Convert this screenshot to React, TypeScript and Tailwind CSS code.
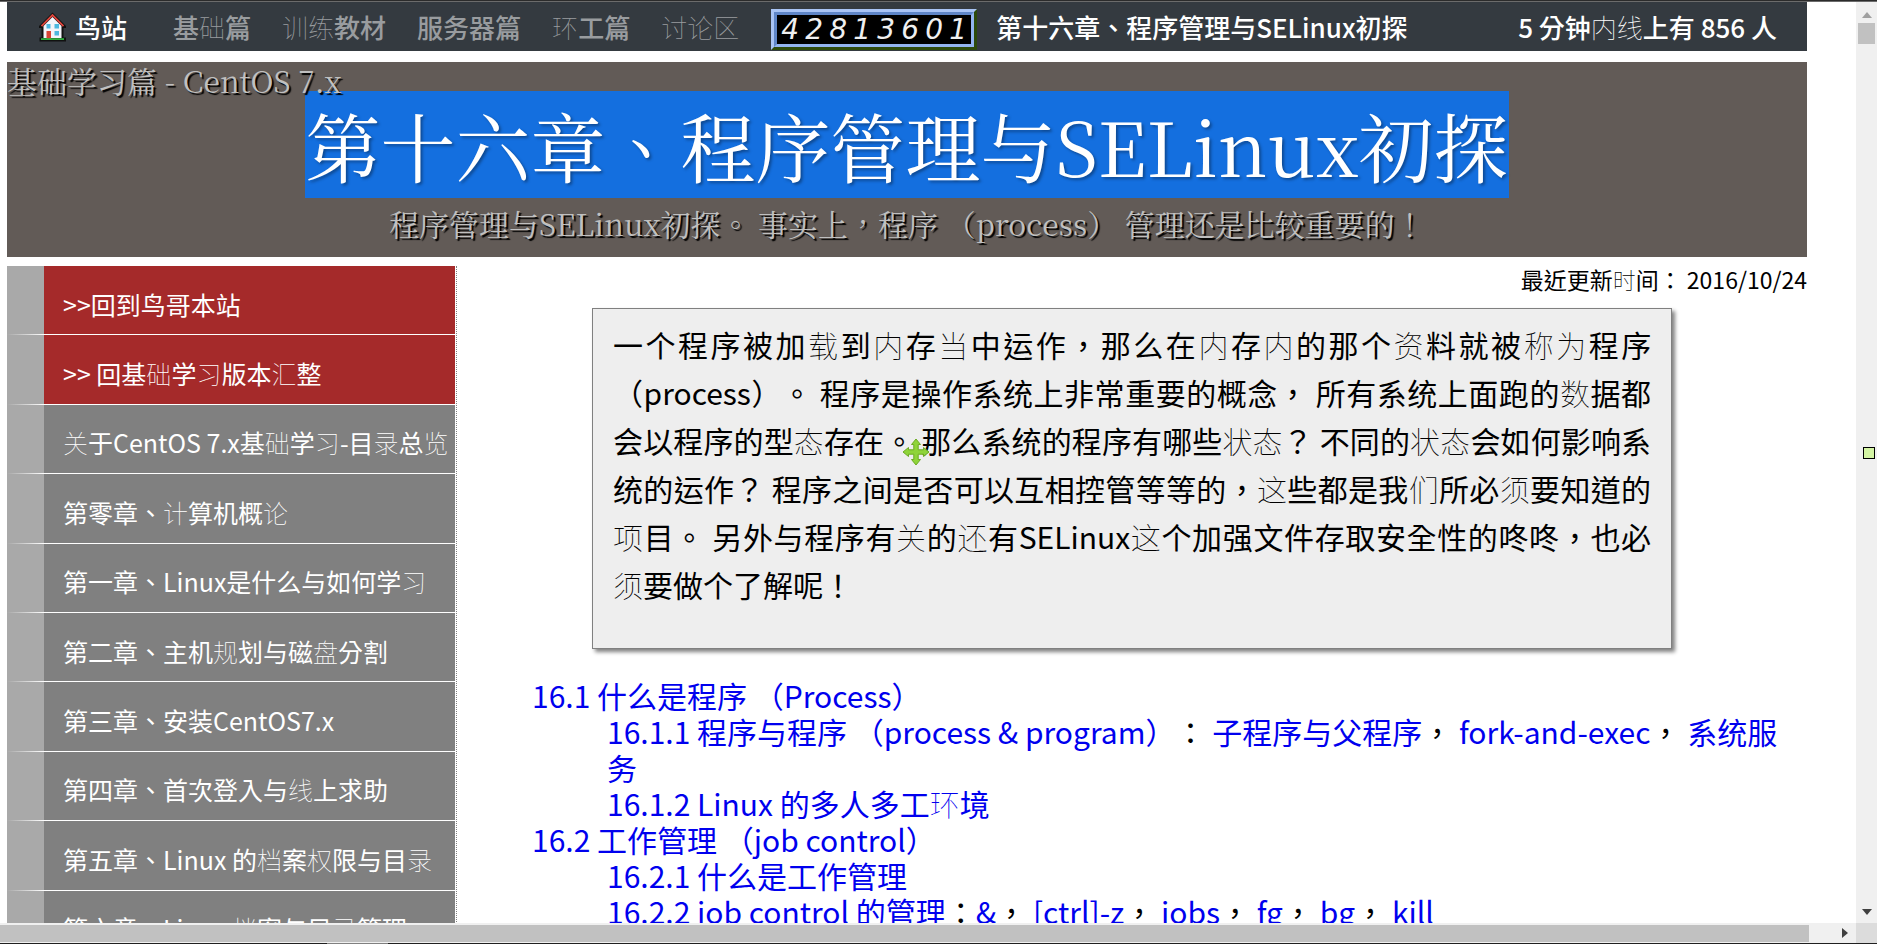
import React, { Fragment } from 'react';

const LIGHT_GLYPHS = /([础习汇关录览计论规盘线档权训练环讨区内载当资称为数态状这们须项还时]+)/;

/** Renders a string, giving the glyphs of the fallback face their hairline weight. */
function Mixed({ text }: { text: string }) {
  return (
    <>
      {text.split(LIGHT_GLYPHS).map((part, i) =>
        i % 2 === 1 ? (
          <span key={i} className="font-thin">
            {part}
          </span>
        ) : (
          <Fragment key={i}>{part}</Fragment>
        ),
      )}
    </>
  );
}

function HouseIcon() {
  return (
    <svg viewBox="0 0 27 30" className="h-[30px] w-[27px] shrink-0" aria-hidden="true">
      <path d="M13.5 0.5 L27 14 V16 H24.5 V25.5 H27 V29.5 H0.5 V25.5 H2.5 V16 H0 V14 Z" fill="#111111" />
      <path d="M4.5 14 L13.5 5 L22.5 14 V26 H4.5 Z" fill="#f4f4fa" />
      <path d="M2.5 14.2 L13.5 3 L24.5 14.2" fill="none" stroke="#e0453c" strokeWidth="1.8" />
      <rect x="7.5" y="12" width="4" height="4.5" fill="#4db8e0" />
      <rect x="15.5" y="12" width="4.5" height="4.5" fill="#4db8e0" />
      <rect x="15.5" y="19" width="4.5" height="4.5" fill="#4db8e0" />
      <rect x="7.5" y="19" width="4.5" height="8" fill="#d84436" />
      <rect x="2" y="26.2" width="23" height="1.8" fill="#2fae3f" />
    </svg>
  );
}

function MoveCursor() {
  return (
    <svg viewBox="0 0 28 28" className="absolute top-[129px] left-[309px] h-7 w-7" aria-hidden="true">
      <path
        d="M14 1 L18.5 6.5 H16.2 V11.8 H21.5 V9.5 L27 14 L21.5 18.5 V16.2 H16.2 V21.5 H18.5 L14 27 L9.5 21.5 H11.8 V16.2 H6.5 V18.5 L1 14 L6.5 9.5 V11.8 H11.8 V6.5 H9.5 Z"
        fill="#8fd43a"
        stroke="#6cab22"
        strokeWidth="1"
        strokeLinejoin="round"
      />
    </svg>
  );
}

const NAV_LINKS = ['基础篇', '训练教材', '服务器篇', '环工篇', '讨论区'];

function NavBar() {
  return (
    <nav className="flex h-[49px] items-center bg-[#343a40] pr-[30px] pl-8 text-[26px] leading-[36px] font-medium whitespace-nowrap text-white">
      <a href="#home" className="mr-[46px] flex items-center gap-[9px]">
        <HouseIcon />
        鸟站
      </a>
      <div className="flex gap-[31px] text-[#999c9f]">
        {NAV_LINKS.map((label) => (
          <a key={label} href="#nav">
            <Mixed text={label} />
          </a>
        ))}
      </div>
      <div className="mb-px ml-8 self-end border-[3px] border-t-[#a9c4f5] border-r-[#2d4a0c] border-b-[#2d4a0c] border-l-[#a9c4f5]">
        <div className="border-[3px] border-t-[#5f86c8] border-r-[#93b4f0] border-b-[#93b4f0] border-l-[#5f86c8]">
          <div className="flex h-[29px] items-center bg-black px-px font-['DejaVu_Sans',sans-serif] text-[28px] font-normal text-[#f0f0f0] italic">
            {'42813601'.split('').map((digit, i) => (
              <span key={i} className="w-6 text-center">
                {digit}
              </span>
            ))}
          </div>
        </div>
      </div>
      <a href="#chapter" className="ml-[19px]">
        第十六章、程序管理与SELinux初探
      </a>
      <span className="ml-auto">
        <Mixed text="5 分钟内线上有 856 人" />
      </span>
    </nav>
  );
}

function Banner() {
  return (
    <header className="mt-[11px] h-[195px] bg-[#625b57] font-['Noto_Serif_CJK_TC','Noto_Serif',serif] text-[30px] text-[#c0c0c0] [text-shadow:2px_2px_1px_#000]">
      <p className="relative z-10 leading-9">基础学习篇 - CentOS 7.x</p>
      <h1 className="pt-1 text-center text-[75px] leading-[85px] font-normal text-white [text-shadow:2px_2px_3px_rgba(0,0,0,0.35)]">
        <span className="bg-[#146fdf]">第十六章、程序管理与SELinux初探</span>
      </h1>
      <p className="relative z-10 pt-4 text-center leading-[40px]">
        程序管理与SELinux初探。 事实上，程序 （process） 管理还是比较重要的！
      </p>
    </header>
  );
}

const CHAPTERS = [
  { label: '>>回到鸟哥本站', back: true },
  { label: '>> 回基础学习版本汇整', back: true },
  { label: '关于CentOS 7.x基础学习-目录总览' },
  { label: '第零章、计算机概论' },
  { label: '第一章、Linux是什么与如何学习' },
  { label: '第二章、主机规划与磁盘分割' },
  { label: '第三章、安装CentOS7.x' },
  { label: '第四章、首次登入与线上求助' },
  { label: '第五章、Linux 的档案权限与目录' },
  { label: '第六章、Linux 档案与目录管理' },
];

function Sidebar() {
  return (
    <aside className="w-[450px] shrink-0">
      <ul className="grid h-[694px] auto-rows-fr border-r border-dotted border-[#808080] pr-px text-[25px] leading-9 text-white">
        {CHAPTERS.map(({ label, back }) => (
          <li key={label} className="flex flex-col">
            <a href="#chapter" className="flex grow">
              <span className="w-[37px] bg-[#a9a9a9]" />
              <span
                className={
                  back
                    ? 'flex grow items-center bg-[#a52a2a] pt-[7px] pl-[19px] whitespace-nowrap'
                    : 'flex grow items-center bg-[#808080] pt-[7px] pl-[19px] whitespace-nowrap'
                }
              >
                <span>
                  <Mixed text={label} />
                </span>
              </span>
            </a>
            <span className="flex h-px">
              <span className="w-[37px] bg-linear-to-r from-[#a9a9a9] to-white" />
              <span className="grow bg-white" />
            </span>
          </li>
        ))}
      </ul>
    </aside>
  );
}

const INTRO =
  '一个程序被加载到内存当中运作，那么在内存内的那个资料就被称为程序（process）。 程序是操作系统上非常重要的概念， 所有系统上面跑的数据都会以程序的型态存在。 那么系统的程序有哪些状态？ 不同的状态会如何影响系统的运作？ 程序之间是否可以互相控管等等的，这些都是我们所必须要知道的项目。 另外与程序有关的还有SELinux这个加强文件存取安全性的咚咚，也必须要做个了解呢！';

function Link({ children }: { children: string }) {
  return (
    <a href="#section" className="text-[#0000ee]">
      <Mixed text={children} />
    </a>
  );
}

function Contents() {
  return (
    <ul className="mt-7 pr-2 pl-[75px] text-[30px] leading-9">
      <li>
        <Link>16.1 什么是程序 （Process）</Link>
        <ul className="pl-[75px]">
          <li>
            <Link>16.1.1 程序与程序 （process & program）</Link>： <Link>子程序与父程序</Link>，{' '}
            <Link>fork-and-exec</Link>， <Link>系统服务</Link>
          </li>
          <li>
            <Link>16.1.2 Linux 的多人多工环境</Link>
          </li>
        </ul>
      </li>
      <li>
        <Link>16.2 工作管理 （job control）</Link>
        <ul className="pl-[75px]">
          <li>
            <Link>16.2.1 什么是工作管理</Link>
          </li>
          <li>
            <Link>16.2.2 job control 的管理</Link>：<Link>&</Link>， <Link>[ctrl]-z</Link>， <Link>jobs</Link>，{' '}
            <Link>fg</Link>， <Link>bg</Link>， <Link>kill</Link>
          </li>
        </ul>
      </li>
    </ul>
  );
}

function Article() {
  return (
    <main className="min-w-0 grow">
      <p className="text-right text-[23px] leading-[26px]">
        <Mixed text="最近更新时间： 2016/10/24" />
      </p>
      <div className="relative mt-4 mr-[135px] ml-[135px] h-[341px] border border-[#808080] bg-[#eeeeee] px-5 pt-[11px] shadow-[3px_3px_4px_#808080]">
        <p className="text-justify text-[30px] leading-12">
          <Mixed text={INTRO} />
        </p>
        <MoveCursor />
      </div>
      <Contents />
    </main>
  );
}

function VerticalScrollbar() {
  return (
    <div className="relative flex w-[21px] shrink-0 flex-col items-center bg-[#f0f0f0] py-2">
      <svg viewBox="0 0 10 6" className="mt-[2px] h-[6px] w-[10px]" aria-hidden="true">
        <path d="M0 6 L5 0 L10 6 Z" fill="#a0a0a0" />
      </svg>
      <div className="mt-[5px] h-[21px] w-[17px] bg-[#c1c1c1]" />
      <svg viewBox="0 0 10 6" className="mt-auto h-[6px] w-[10px]" aria-hidden="true">
        <path d="M0 0 L5 6 L10 0 Z" fill="#404040" />
      </svg>
      <div className="absolute top-[445px] right-[2px] h-3 w-3 border border-black bg-[#d4f5a4]" />
    </div>
  );
}

function HorizontalScrollbar() {
  return (
    <div className="flex h-5 shrink-0 bg-[#f0f0f0]">
      <div className="mt-[2px] mb-px grow bg-[#c1c1c1]" />
      <div className="flex w-[47px] items-center justify-end pr-2">
        <svg viewBox="0 0 6 10" className="h-[10px] w-[6px]" aria-hidden="true">
          <path d="M0 0 L6 5 L0 10 Z" fill="#404040" />
        </svg>
      </div>
      <div className="w-[21px] bg-[#dcdcdc]" />
    </div>
  );
}

export default function App() {
  return (
    <div
      lang="zh-Hant"
      className="flex h-screen flex-col overflow-hidden bg-white font-['Noto_Sans_CJK_TC',sans-serif] text-black [text-spacing-trim:space-all]"
    >
      <div className="h-[2px] shrink-0 border-t border-[#2b2b2b] bg-[#6b6b6b]" />
      <div className="flex min-h-0 grow">
        <div className="min-w-0 grow overflow-hidden pr-[49px] pl-[7px]">
          <NavBar />
          <Banner />
          <div className="mt-[9px] flex">
            <Sidebar />
            <Article />
          </div>
        </div>
        <VerticalScrollbar />
      </div>
      <HorizontalScrollbar />
      <div className="flex h-px shrink-0 bg-[#202020] pl-[327px]">
        <div className="w-[61px] bg-[#808080]" />
      </div>
    </div>
  );
}
